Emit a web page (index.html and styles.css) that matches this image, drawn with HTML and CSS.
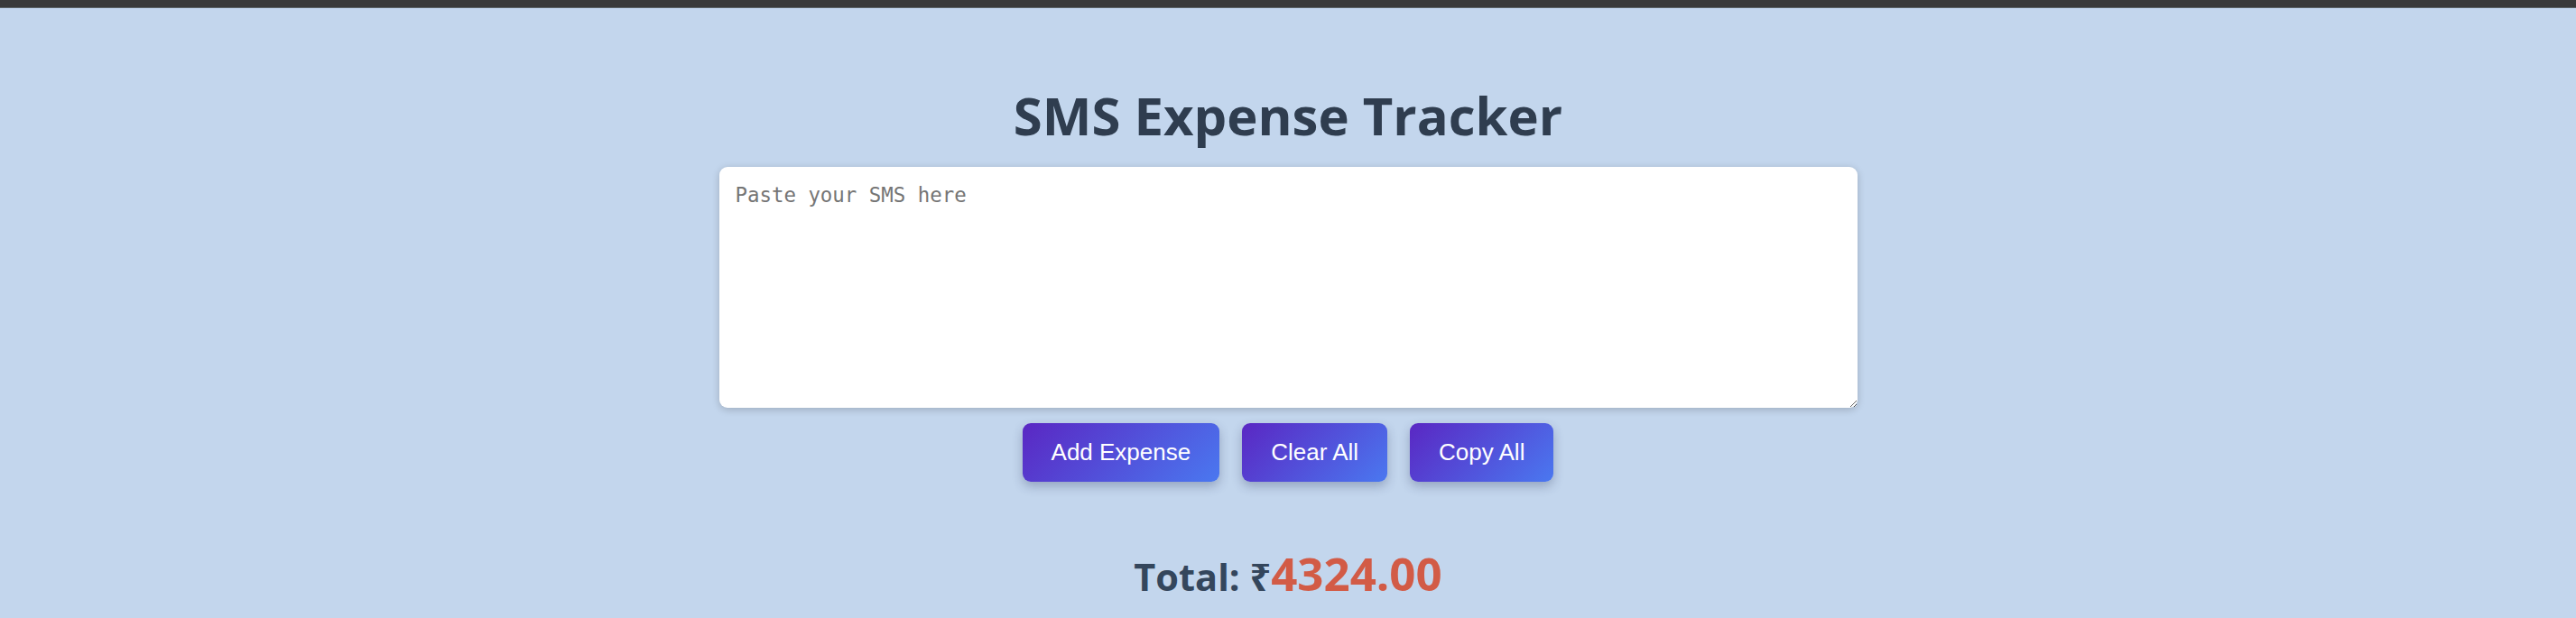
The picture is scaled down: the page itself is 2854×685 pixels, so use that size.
FILE: index.html
```html
<!DOCTYPE html>
<html lang="en">
<head>
<meta charset="utf-8">
<title>SMS Expense Tracker</title>
<link rel="stylesheet" href="styles.css">
</head>
<body>
<div class="topbar"></div>
<main class="app">
  <h1 class="title">SMS Expense Tracker</h1>
  <textarea class="sms" placeholder="Paste your SMS here"></textarea>
  <div class="actions">
    <button class="btn">Add Expense</button>
    <button class="btn">Clear All</button>
    <button class="btn">Copy All</button>
  </div>
  <h2 class="total">Total: ₹<span class="amount">4324.00</span></h2>
</main>
</body>
</html>
```
FILE: styles.css
```css
html, body {
  margin: 0;
  padding: 0;
}
body {
  background: #c3d6ed;
  font-family: "Open Sans", "Noto Sans", sans-serif;
  height: 685px;
  overflow: hidden;
}
.topbar {
  height: 8px;
  background: #3a3a3a;
  border-bottom: 1px solid #5d6468;
}
.app {
  display: flex;
  flex-direction: column;
  align-items: center;
}
.title {
  margin: 83px 0 0;
  font-size: 58px;
  line-height: 72px;
  font-weight: 700;
  color: #2f3d4f;
}
.sms {
  box-sizing: border-box;
  width: 1261px;
  height: 267px;
  margin-top: 21px;
  padding: 16px 18px;
  border: none;
  border-radius: 9px;
  background: #fff;
  box-shadow: 0 2px 8px rgba(0, 0, 0, 0.2);
  font-family: "DejaVu Sans Mono", "Liberation Mono", monospace;
  font-size: 22.4px;
  line-height: 30px;
  color: #333;
  outline: none;
}
.sms::placeholder {
  color: #757575;
}
.actions {
  display: flex;
  gap: 25px;
  margin-top: 17px;
}
.btn {
  height: 65px;
  padding: 0 32px;
  border: none;
  border-radius: 9px;
  background: linear-gradient(135deg, #5a27c3 0%, #4a78f0 100%);
  color: #fff;
  font-family: "Liberation Sans", Arial, sans-serif;
  font-size: 26px;
  box-shadow: 0 5px 12px rgba(40, 50, 90, 0.3);
}
.total {
  margin: 71px 0 0;
  font-size: 41.5px;
  line-height: 60px;
  font-weight: 700;
  color: #34465c;
}
.amount {
  font-size: 51px;
  color: #d25b46;
}
```
